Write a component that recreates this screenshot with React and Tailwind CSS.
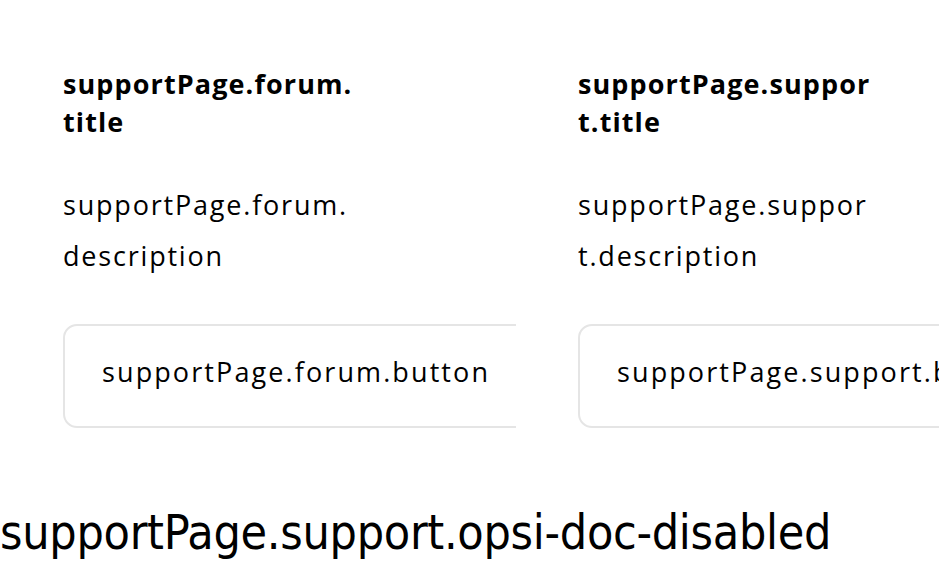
export default function App() {
  const cards = [
    { key: "forum" },
    { key: "support" },
  ];

  return (
    <div className="w-[939px] h-[567px] overflow-hidden bg-white text-black font-['Open_Sans',sans-serif]">
      <div className="flex gap-[62px] pl-[63px] pt-[65px]">
        {cards.map((c) => (
          <div key={c.key} className="w-[453px] shrink-0 overflow-hidden">
            <h2 className="max-w-[300px] break-all text-[27px] font-bold leading-[38px] tracking-[1.1px]">
              supportPage.{c.key}.title
            </h2>
            <p className="mt-[38px] max-w-[300px] break-all text-[27px] leading-[51px] tracking-[1.8px]">
              supportPage.{c.key}.description
            </p>
            <button className="mt-[43px] h-[104px] whitespace-nowrap rounded-[14px] border-2 border-[#e5e5e5] px-[37px] pb-[8px] text-left text-[27px] tracking-[2.1px]">
              supportPage.{c.key}.button
            </button>
          </div>
        ))}
      </div>
      <p className="mt-[76px] whitespace-nowrap font-['Liberation_Sans_Narrow','DejaVu_Sans_Condensed',sans-serif] text-[48px] leading-[56px] tracking-[-0.3px]">
        supportPage.support.opsi-doc-disabled
      </p>
    </div>
  );
}
